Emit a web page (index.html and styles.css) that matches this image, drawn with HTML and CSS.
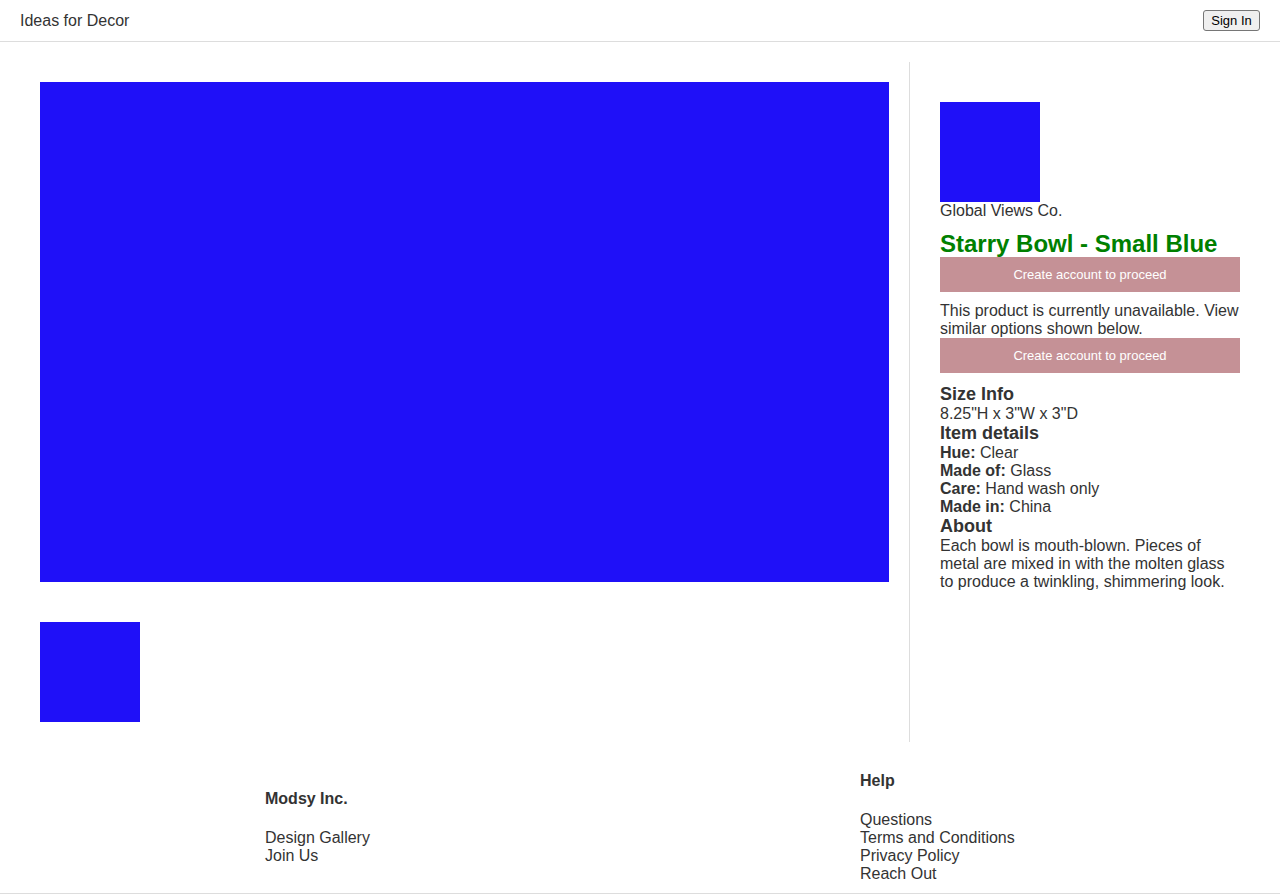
FILE: index.html
```html
<!DOCTYPE html>
<html lang="en">
<head>
<meta charset="utf-8">
<title>Starry Bowl - Small Blue</title>
<link rel="stylesheet" href="styles.css">
</head>
<body>
<header class="topbar">
  <div class="brand">Ideas for Decor</div>
  <button class="signin">Sign In</button>
</header>
<main class="product">
  <section class="gallery">
    <div class="hero-image"></div>
    <div class="thumbs">
      <div class="thumb"></div>
    </div>
  </section>
  <aside class="details">
    <div class="brand-logo"></div>
    <div class="vendor">Global Views Co.</div>
    <h2 class="title">Starry Bowl - Small Blue</h2>
    <button class="cta">Create account to proceed</button>
    <p class="notice">This product is currently unavailable. View similar options shown below.</p>
    <button class="cta">Create account to proceed</button>
    <h3 class="section-title first">Size Info</h3>
    <div class="line">8.25"H x 3"W x 3"D</div>
    <h3 class="section-title">Item details</h3>
    <div class="line"><b>Hue:</b> Clear</div>
    <div class="line"><b>Made of:</b> Glass</div>
    <div class="line"><b>Care:</b> Hand wash only</div>
    <div class="line"><b>Made in:</b> China</div>
    <h3 class="section-title">About</h3>
    <p class="about">Each bowl is mouth-blown. Pieces of metal are mixed in with the molten glass to produce a twinkling, shimmering look.</p>
  </aside>
</main>
<footer class="footer">
  <div class="footer-col company">
    <h4 class="footer-title">Modsy Inc.</h4>
    <div class="footer-link">Design Gallery</div>
    <div class="footer-link">Join Us</div>
  </div>
  <div class="footer-col">
    <h4 class="footer-title">Help</h4>
    <div class="footer-link">Questions</div>
    <div class="footer-link">Terms and Conditions</div>
    <div class="footer-link">Privacy Policy</div>
    <div class="footer-link">Reach Out</div>
  </div>
</footer>
</body>
</html>
```

FILE: styles.css
```css
* { box-sizing: border-box; }

body {
  margin: 0;
  font-family: "Liberation Sans", Arial, sans-serif;
  font-size: 16px;
  color: #333;
  background: #fff;
}

.topbar {
  height: 42px;
  display: flex;
  align-items: center;
  justify-content: space-between;
  padding: 0 20px;
  border-bottom: 1px solid #ddd;
}

.brand { line-height: 18px; margin-top: 1px; }

.signin {
  font-family: "Liberation Sans", Arial, sans-serif;
  font-size: 13px;
  color: #000;
  height: 21px;
  width: 57px;
  padding: 0 4px;
  background: #efefef;
  border: 1px solid #767676;
  border-radius: 3px;
}

.product {
  display: flex;
  padding: 20px 20px 0;
}

.gallery {
  flex: 1;
  padding: 20px;
  border-right: 1px solid #ddd;
}

.hero-image {
  height: 500px;
  background: #1f10f8;
}

.thumbs {
  margin-top: 40px;
  display: flex;
}

.thumb {
  width: 100px;
  height: 100px;
  background: #1f10f8;
}

.details {
  width: 350px;
  padding: 40px 20px 20px 30px;
}

.brand-logo {
  width: 100px;
  height: 100px;
  background: #1f10f8;
}

.vendor { line-height: normal; }

.title {
  margin: 10px 0 0;
  font-size: 24px;
  font-weight: bold;
  color: #008000;
  line-height: 27px;
}

.cta {
  display: block;
  width: 100%;
  height: 35px;
  border: none;
  background: #c59196;
  color: #fff;
  font-family: "Liberation Sans", Arial, sans-serif;
  font-size: 13px;
  padding: 0;
}

.notice {
  margin: 10px 0 0;
  line-height: normal;
}

.section-title {
  margin: 0;
  font-size: 18px;
  font-weight: bold;
  line-height: normal;
}

.section-title.first { margin-top: 11px; }

.line { line-height: normal; }

.about {
  margin: 0;
  line-height: normal;
}

.footer {
  display: flex;
  align-items: center;
  padding: 9px 0 10px 265px;
  border-bottom: 1px solid #ddd;
}

.footer-col.company { width: 595px; }

.footer-title {
  margin: 21px 0;
  font-size: 16px;
  font-weight: bold;
  line-height: normal;
}

.footer-link { line-height: normal; }
```
